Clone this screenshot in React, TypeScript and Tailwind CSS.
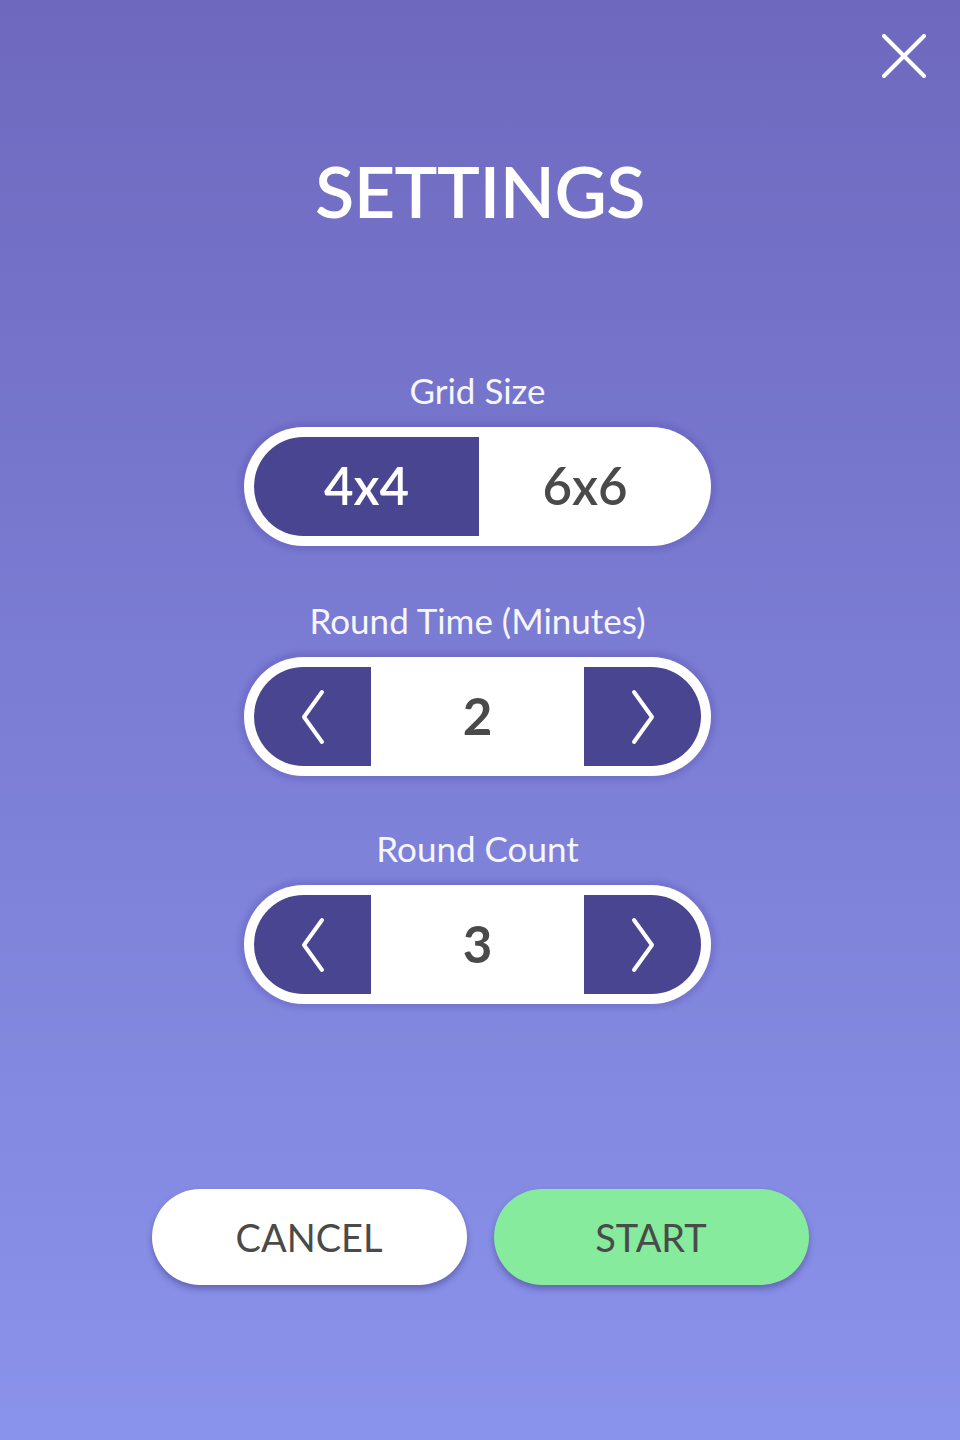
import { ReactElement } from 'react'

const Chevron = ({ dir }: { dir: 'left' | 'right' }): ReactElement => (
  <svg width="28" height="56" viewBox="0 0 28 56" fill="none">
    <path
      d={dir === 'left' ? 'M23 3 L5 28 L23 53' : 'M5 3 L23 28 L5 53'}
      stroke="white"
      strokeWidth="4"
      strokeLinecap="round"
      strokeLinejoin="round"
    />
  </svg>
)

const Label = ({ children, className = '' }: { children: string; className?: string }): ReactElement => (
  <div className={`h-[50px] leading-[50px] text-[35px] text-[#f6f6ff] ${className}`}>{children}</div>
)

const Stepper = ({ value }: { value: number }): ReactElement => (
  <div className="w-[467px] h-[119px] mt-[12px] rounded-full bg-white p-[10px] shadow-[0_0_5px_5px_rgba(75,65,165,0.22)]">
    <div className="flex h-full">
      <button className="w-[117px] h-full rounded-l-full bg-[#494590] flex items-center justify-center">
        <Chevron dir="left" />
      </button>
      <div className="flex-1 flex items-center justify-center text-[51px] font-bold text-[#4a4a4a]">{value}</div>
      <button className="w-[117px] h-full rounded-r-full bg-[#494590] flex items-center justify-center">
        <Chevron dir="right" />
      </button>
    </div>
  </div>
)

export default function App(): ReactElement {
  return (
    <div className="w-full min-h-[1440px] bg-gradient-to-b from-[#6e69bf] to-[#8a93eb] flex flex-col items-center font-['Lato','Open_Sans',sans-serif] select-none">
      <div className="w-full flex justify-end pt-[34px] pr-[34px] h-[140px]">
        <button className="w-[44px] h-[44px]">
          <svg width="44" height="44" viewBox="0 0 44 44" fill="none">
            <path d="M2 2 L42 42 M42 2 L2 42" stroke="white" strokeWidth="4" strokeLinecap="round" />
          </svg>
        </button>
      </div>

      <h1 className="h-[100px] leading-[100px] text-[72px] font-semibold text-white tracking-[-0.5px]">SETTINGS</h1>

      {/* options */}
      <div className="w-full flex flex-col items-center pr-[5px]">
        <Label className="mt-[125px]">Grid Size</Label>
        <div className="w-[467px] h-[119px] mt-[12px] rounded-full bg-white p-[10px] shadow-[0_0_5px_5px_rgba(75,65,165,0.22)]">
          <div className="flex h-full">
            <button className="w-[225px] h-full rounded-l-full bg-[#494590] text-white text-[51px] font-semibold flex items-center justify-center">
              4x4
            </button>
            <button className="flex-1 h-full text-[#4a4a4a] text-[51px] font-semibold flex items-center justify-center pr-[10px]">
              6x6
            </button>
          </div>
        </div>

        <Label className="mt-[49px]">Round Time (Minutes)</Label>
        <Stepper value={2} />

        <Label className="mt-[47px]">Round Count</Label>
        <Stepper value={3} />
      </div>

      <div className="flex gap-[27px] mt-[185px]">
        <button className="w-[315px] h-[96px] rounded-full bg-white text-[#4a4a4a] text-[38px] shadow-[0_4px_6px_rgba(45,40,110,0.4)]">
          CANCEL
        </button>
        <button className="w-[315px] h-[96px] rounded-full bg-[#86eb9c] text-[#4a4a4a] text-[38px] shadow-[0_4px_6px_rgba(45,40,110,0.4)]">
          START
        </button>
      </div>
    </div>
  )
}
